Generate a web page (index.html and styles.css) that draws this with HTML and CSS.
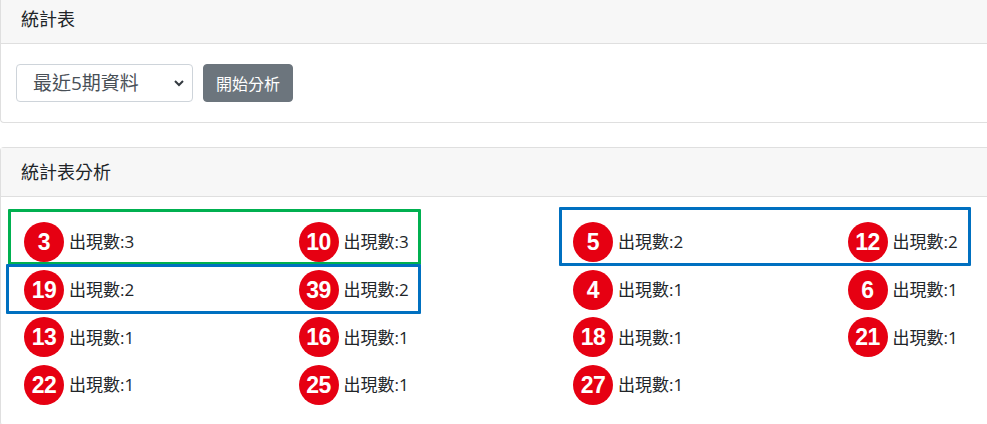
FILE: index.html
```html
<!DOCTYPE html>
<html lang="zh-Hant">
<head>
  <meta charset="UTF-8" />
  <meta name="viewport" content="width=device-width, initial-scale=1" />
  <title>統計表</title>
  <link rel="stylesheet" href="styles.css">
</head>
<body>
  <div class="page">

    <!-- 統計表 : choix de la période -->
    <div class="card card-top">
      <div class="card-header">統計表</div>
      <div class="card-body form-body">
        <span class="select-wrap">
          <select class="period">
            <option>最近5期資料</option>
            <option>最近10期資料</option>
            <option>最近20期資料</option>
          </select>
          <svg class="chevron" width="10" height="8" viewBox="0 0 10 8">
            <path d="M1 2 L5 6 L9 2" fill="none" stroke="#343a40" stroke-width="2"/>
          </svg>
        </span>
        <button class="btn">開始分析</button>
      </div>
    </div>

    <!-- 統計表分析 -->
    <div class="card">
      <div class="card-header">統計表分析</div>
      <div class="card-body stats-body">
        <div class="stats">
          <div class="item"><span class="ball">3</span>出現數:3</div>
          <div class="item"><span class="ball">10</span>出現數:3</div>
          <div class="item"><span class="ball">5</span>出現數:2</div>
          <div class="item"><span class="ball">12</span>出現數:2</div>
          <div class="item"><span class="ball">19</span>出現數:2</div>
          <div class="item"><span class="ball">39</span>出現數:2</div>
          <div class="item"><span class="ball">4</span>出現數:1</div>
          <div class="item"><span class="ball">6</span>出現數:1</div>
          <div class="item"><span class="ball">13</span>出現數:1</div>
          <div class="item"><span class="ball">16</span>出現數:1</div>
          <div class="item"><span class="ball">18</span>出現數:1</div>
          <div class="item"><span class="ball">21</span>出現數:1</div>
          <div class="item"><span class="ball">22</span>出現數:1</div>
          <div class="item"><span class="ball">25</span>出現數:1</div>
          <div class="item"><span class="ball">27</span>出現數:1</div>
        </div>

        <!-- cadres de mise en évidence -->
        <div class="mark mark-green"></div>
        <div class="mark mark-blue-left"></div>
        <div class="mark mark-blue-right"></div>
      </div>
    </div>

  </div>
</body>
</html>
```

FILE: styles.css
```css
html, body {
  margin: 0;
  overflow: hidden;
}
body {
  font-family: "Open Sans", "Noto Sans CJK TC", sans-serif;
  font-size: 16px;
  line-height: 1.5;
  color: #212529;
  background-color: #ffffff;
}
.page {
  margin-top: -6px;
}
.card {
  border: 1px solid #dfdfdf;
  border-right: 0;
  border-radius: 4px 0 0 4px;
  background-color: #ffffff;
}
.card-top {
  margin-bottom: 24px;
}
.card-header {
  background-color: #f7f7f7;
  border-bottom: 1px solid #dfdfdf;
  padding: 12px 20px;
  height: 24px;
  font-size: 18px;
  line-height: 24px;
}
.form-body {
  display: flex;
  gap: 10px;
  padding: 20px 20px 20px 15px;
}
.select-wrap {
  position: relative;
  display: inline-block;
}
.period {
  -webkit-appearance: none;
  appearance: none;
  width: 177px;
  height: 38px;
  padding: 0 30px 0 16px;
  font-family: "Open Sans", "Noto Sans CJK TC", sans-serif;
  font-size: 19px;
  color: #495057;
  background-color: #ffffff;
  border: 1px solid #ced4da;
  border-radius: 4px;
  box-sizing: border-box;
}
.chevron {
  position: absolute;
  right: 9px;
  top: 15px;
  pointer-events: none;
}
.btn {
  height: 38px;
  width: 90px;
  padding: 0 12px;
  font-family: "Open Sans", "Noto Sans CJK TC", sans-serif;
  font-size: 16px;
  color: #ffffff;
  background-color: #6c757d;
  border: 1px solid #6c757d;
  border-radius: 4px;
  cursor: pointer;
}
.stats-body {
  position: relative;
  padding: 25px 0 20px 23px;
}
.stats {
  display: grid;
  grid-template-columns: repeat(3, 274.5px) 1fr;
  row-gap: 7.7px;
}
.item {
  display: flex;
  align-items: center;
  gap: 5px;
  height: 40px;
  font-size: 17px;
}
.ball {
  width: 40px;
  height: 40px;
  border-radius: 50%;
  background-color: #e60012;
  color: #ffffff;
  font-family: "Liberation Sans", Arial, sans-serif;
  font-weight: bold;
  font-size: 23px;
  line-height: 41px;
  text-align: center;
  letter-spacing: -0.5px;
}
.mark {
  position: absolute;
  border: 3px solid;
  border-radius: 1px;
  box-sizing: border-box;
}
.mark-green {
  border-color: #00b050;
  left: 7px;
  top: 12px;
  width: 413px;
  height: 56px;
}
.mark-blue-left {
  border-color: #0070c0;
  left: 5px;
  top: 67px;
  width: 415px;
  height: 50px;
}
.mark-blue-right {
  border-color: #0070c0;
  left: 558px;
  top: 10px;
  width: 412px;
  height: 59px;
}
```
